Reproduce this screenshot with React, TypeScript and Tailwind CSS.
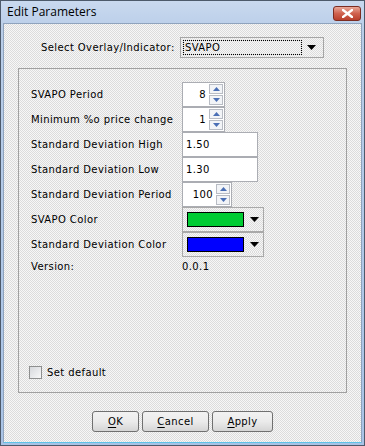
const dither =
  'bg-[repeating-conic-gradient(#f7f7f7_0_25%,#dcdcdc_0_50%)] bg-[length:2px_2px]';

function Spinner({ value, width }: { value: string; width: string }) {
  return (
    <div className="flex h-[25px] border border-[#abadb3] bg-white">
      <div className={`${width} flex items-center justify-end pr-[3px]`}>{value}</div>
      <div className="flex w-[15px] flex-col gap-[1px] py-[1px] pr-[1px]">
        <div className="flex flex-1 items-center justify-center border border-[#b8bcc4] bg-[#f2f4f7]">
          <svg width="7" height="4" viewBox="0 0 7 4">
            <path d="M3.5 0 L7 4 L0 4 Z" fill="#4a6fb5" />
          </svg>
        </div>
        <div className="flex flex-1 items-center justify-center border border-[#b8bcc4] bg-[#f2f4f7]">
          <svg width="7" height="4" viewBox="0 0 7 4">
            <path d="M0 0 L7 0 L3.5 4 Z" fill="#4a6fb5" />
          </svg>
        </div>
      </div>
    </div>
  );
}

function TextBox({ value }: { value: string }) {
  return (
    <div className="flex h-[25px] w-[76px] items-center border border-[#abadb3] bg-white pl-[3px]">
      {value}
    </div>
  );
}

function ColorPick({ color }: { color: string }) {
  return (
    <div className="flex h-[25px] w-[82px] items-center border border-[#a9a9a9] pl-[4px]">
      <div className={`h-[15px] w-[57px] border border-black ${color}`} />
      <div className={`ml-[2px] flex h-[15px] w-[17px] items-center justify-center ${dither}`}>
        <svg width="9" height="5" viewBox="0 0 9 5">
          <path d="M0 0 L9 0 L4.5 5 Z" fill="#000" />
        </svg>
      </div>
    </div>
  );
}

const rows = [
  { label: 'SVAPO Period', field: <Spinner value="8" width="w-[26px]" /> },
  { label: 'Minimum %o price change', field: <Spinner value="1" width="w-[26px]" /> },
  { label: 'Standard Deviation High', field: <TextBox value="1.50" /> },
  { label: 'Standard Deviation Low', field: <TextBox value="1.30" /> },
  { label: 'Standard Deviation Period', field: <Spinner value="100" width="w-[33px]" /> },
  { label: 'SVAPO Color', field: <ColorPick color="bg-[#00cc33]" /> },
  { label: 'Standard Deviation Color', field: <ColorPick color="bg-[#0000ff]" /> },
];

export default function App() {
  return (
    <div className="flex h-[446px] w-[365px] flex-col border border-[#4d5a6b] bg-[linear-gradient(180deg,#c9d9ef_0px,#b9cde8_30px,#a9c3e6_100%)] font-['DejaVu_Sans',sans-serif] text-[10px] tracking-[0.4px] whitespace-nowrap text-black">
      <div className="flex h-[22px] items-center justify-between pl-[6px] pr-[3px]">
        <span className="font-['Open_Sans',sans-serif] text-[12px] tracking-normal">Edit Parameters</span>
        <div className="mt-[3px] flex h-[15px] w-[28px] items-center justify-center rounded-[3px] border border-[#7c2d22] bg-[linear-gradient(180deg,#e9a99a,#d0624f_50%,#b9402d)]">
          <svg width="11" height="9" viewBox="0 0 11 9">
            <path d="M1 1 L10 8 M10 1 L1 8" stroke="#fff" strokeWidth="2.4" strokeLinecap="square" />
          </svg>
        </div>
      </div>

      <div className={`mx-[2px] mb-[2px] flex flex-1 flex-col border border-[#8fa3bd] border-b-[#5ec3e8] ${dither}`}>
        <div className="mt-[13px] flex items-center pl-[37px]">
          <span className="w-[139px]">Select Overlay/Indicator:</span>
          <div className="flex h-[21px] w-[144px] items-center border border-[#a5a5a5] px-[2px]">
            <div className="flex h-[15px] flex-1 items-center border border-dotted border-black pl-[1px]">
              SVAPO
            </div>
            <svg className="mx-[5px]" width="9" height="5" viewBox="0 0 9 5">
              <path d="M0 0 L9 0 L4.5 5 Z" fill="#000" />
            </svg>
          </div>
        </div>

        <div className="ml-[14px] mt-[10px] flex h-[325px] w-[329px] flex-col border border-[#a0a0a0] pb-[12px] pt-[13px]">
          {rows.map((r) => (
            <div key={r.label} className="flex h-[25px] items-center pl-[12px]">
              <span className="w-[151px]">{r.label}</span>
              {r.field}
            </div>
          ))}
          <div className="mt-[2px] flex h-[14px] items-center pl-[12px]">
            <span className="w-[151px]">Version:</span>
            <span>0.0.1</span>
          </div>

          <div className="mt-auto flex items-center pl-[10px]">
            <div className="h-[13px] w-[13px] border border-[#8e8f8f] bg-[linear-gradient(135deg,#d6d8dc,#f8f8f8)]" />
            <span className="ml-[5px]">Set default</span>
          </div>
        </div>

        <div className="mt-[18px] flex justify-center gap-[3px]">
          {[
            { u: 'O', rest: 'K', w: 'w-[47px]' },
            { u: 'C', rest: 'ancel', w: 'w-[67px]' },
            { u: 'A', rest: 'pply', w: 'w-[61px]' },
          ].map((b) => (
            <div
              key={b.u}
              className={`flex h-[21px] ${b.w} items-center justify-center rounded-[3px] border border-[#707070] bg-[linear-gradient(180deg,#f2f2f2,#ebebeb_50%,#d5d5d5)]`}
            >
              <span className="underline underline-offset-2">{b.u}</span>
              {b.rest}
            </div>
          ))}
        </div>
      </div>
    </div>
  );
}
